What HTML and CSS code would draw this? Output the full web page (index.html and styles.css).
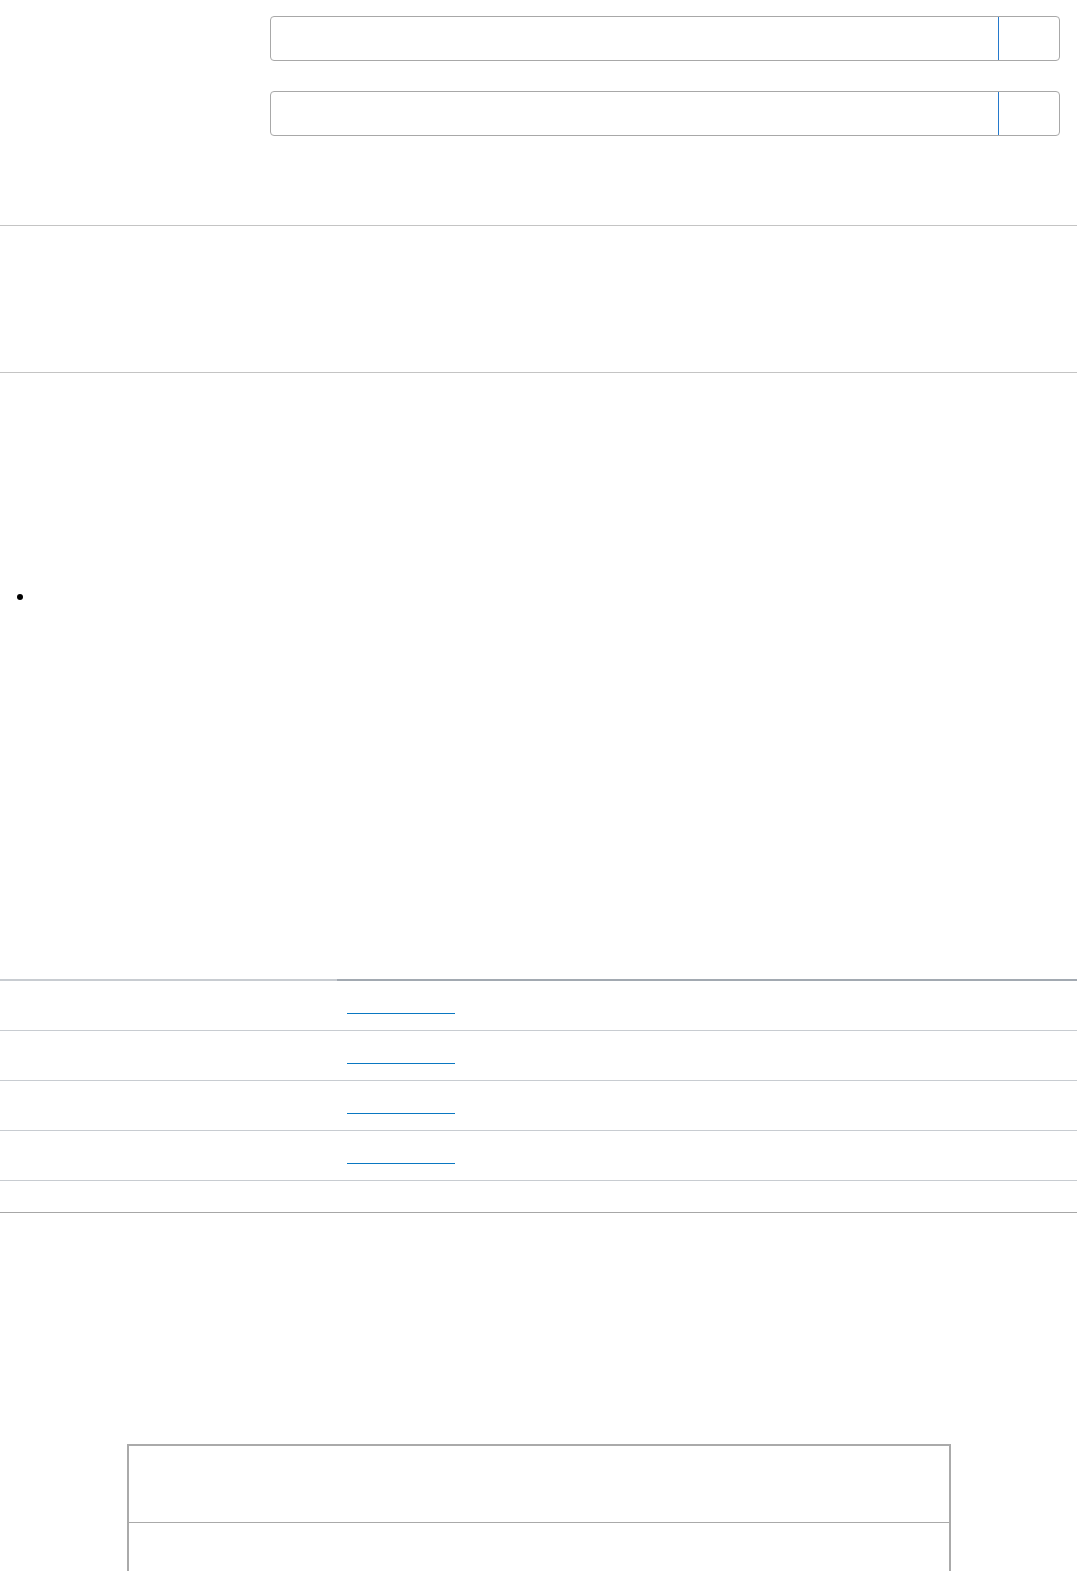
FILE: index.html
```html
<!DOCTYPE html>
<html lang="en">
<head>
<meta charset="utf-8">
<title>Page</title>
<link rel="stylesheet" href="styles.css">
</head>
<body>
<form class="search-form">
  <div class="field-row">
    <div class="field-label"></div>
    <div class="field-box">
      <div class="field-input"></div>
      <div class="field-button"></div>
    </div>
  </div>
  <div class="field-row">
    <div class="field-label"></div>
    <div class="field-box">
      <div class="field-input"></div>
      <div class="field-button"></div>
    </div>
  </div>
</form>

<section class="band"></section>

<ul class="bullets">
  <li>&nbsp;</li>
</ul>

<div class="data-table">
  <div class="dt-row dt-head">
    <div class="dt-cell dt-key"></div>
    <div class="dt-cell dt-val"><span class="dt-link"></span></div>
  </div>
  <div class="dt-row">
    <div class="dt-cell dt-key"></div>
    <div class="dt-cell dt-val"><span class="dt-link"></span></div>
  </div>
  <div class="dt-row">
    <div class="dt-cell dt-key"></div>
    <div class="dt-cell dt-val"><span class="dt-link"></span></div>
  </div>
  <div class="dt-row">
    <div class="dt-cell dt-key"></div>
    <div class="dt-cell dt-val"><span class="dt-link"></span></div>
  </div>
  <div class="dt-foot"></div>
</div>

<div class="box-table">
  <div class="box-row box-first"></div>
  <div class="box-row"></div>
</div>
</body>
</html>
```

FILE: styles.css
```css
html, body {
  margin: 0;
  padding: 0;
  background: #ffffff;
  font-family: "Liberation Sans", Arial, sans-serif;
  font-size: 16px;
  color: #202122;
}

.search-form {
  display: flex;
  flex-direction: column;
  gap: 30px;
  padding-top: 16px;
}

.field-row {
  display: grid;
  grid-template-columns: 270px 790px;
}

.field-box {
  display: flex;
  height: 45px;
  box-sizing: border-box;
  border: 1px solid #a8a8a8;
  border-radius: 4px;
  overflow: hidden;
}

.field-input {
  flex: 1;
  border-right: 1px solid #2479cc;
}

.field-button {
  width: 60px;
}

.band {
  margin-top: 89px;
  height: 146px;
  border-top: 1px solid #c4c4c4;
  border-bottom: 1px solid #c4c4c4;
}

.bullets {
  margin: 211px 0 0;
  padding-left: 36px;
  font-size: 21px;
  line-height: 24px;
  color: #000000;
}

.data-table {
  margin-top: 371px;
  border-top: 2px solid #c8ccd1;
}

.dt-row {
  display: grid;
  grid-template-columns: 337px 1fr;
  height: 50px;
  box-sizing: border-box;
  border-bottom: 1px solid #c8ccd1;
}

.dt-head .dt-val {
  box-shadow: 0 -2px 0 #a2a9b1;
}

.dt-val {
  padding-left: 10px;
  padding-top: 32px;
  box-sizing: border-box;
}

.dt-link {
  display: block;
  width: 108px;
  height: 0;
  border-bottom: 1.5px solid #0a78c2;
}

.dt-foot {
  height: 31px;
  border-bottom: 1px solid #a7a7a7;
}

.box-table {
  width: 824px;
  margin: 231px auto 0;
  box-sizing: border-box;
  border: 2px solid #aaaaaa;
}

.box-row {
  height: 140px;
}

.box-first {
  height: 76px;
  border-bottom: 1px solid #aaaaaa;
}
```
